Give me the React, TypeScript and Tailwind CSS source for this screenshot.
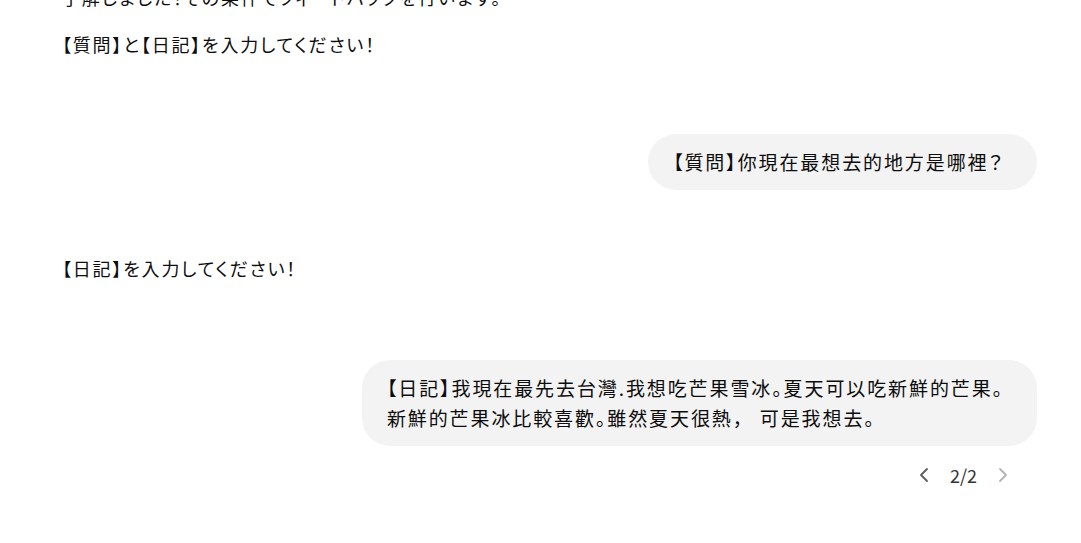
import { ChevronLeft, ChevronRight } from "lucide-react";

const font = "font-['Noto_Sans_CJK_JP','Noto_Sans_CJK_TC',sans-serif] [font-feature-settings:'palt']";

function UserBubble({ children }: { children: React.ReactNode }) {
  return (
    <div className="flex justify-end">
      <div className="max-w-[677px] rounded-[28px] bg-[#f3f3f3] pl-[25px] pr-[33px] py-[13px] text-[19px] leading-[30px] tracking-[1.9px] text-[#0d0d0d]">
        {children}
      </div>
    </div>
  );
}

export default function App() {
  return (
    <div className={`h-[543px] w-[1081px] overflow-hidden bg-white ${font}`}>
      <div className="ml-[62px] mt-[-18px] w-[975px]">
        {/* assistant message */}
        <div className="text-[18px] leading-[30px] tracking-[1.8px] text-[#0d0d0d]">
          <p>了解しました！その条件でフィードバックを行います。</p>
          <p className="mt-[17px]">【質問】と【日記】を入力してください！</p>
        </div>

        <div className="mt-[75px]">
          <UserBubble>【質問】你現在最想去的地方是哪裡？</UserBubble>
        </div>

        <div className="mt-[63px] text-[18px] leading-[30px] tracking-[1.8px] text-[#0d0d0d]">
          <p>【日記】を入力してください！</p>
        </div>

        <div className="mt-[77px]">
          <UserBubble>
            【日記】我現在最先去台灣.我想吃芒果雪冰。夏天可以吃新鮮的芒果。
            <br />
            新鮮的芒果冰比較喜歡。雖然夏天很熱
            <span className="[font-feature-settings:normal]">，</span> 可是我想去。
          </UserBubble>
        </div>

        <div className="mt-[17px] flex items-center justify-end gap-[14px] pr-[22px]">
          <button className="flex h-[24px] w-[24px] items-center justify-center text-[#5d5d5d]">
            <ChevronLeft size={24} strokeWidth={1.8} />
          </button>
          <span className="text-[18px] leading-[24px] text-[#333333]">2/2</span>
          <button className="flex h-[24px] w-[24px] items-center justify-center text-[#b4b4b4]">
            <ChevronRight size={24} strokeWidth={1.8} />
          </button>
        </div>
      </div>
    </div>
  );
}
